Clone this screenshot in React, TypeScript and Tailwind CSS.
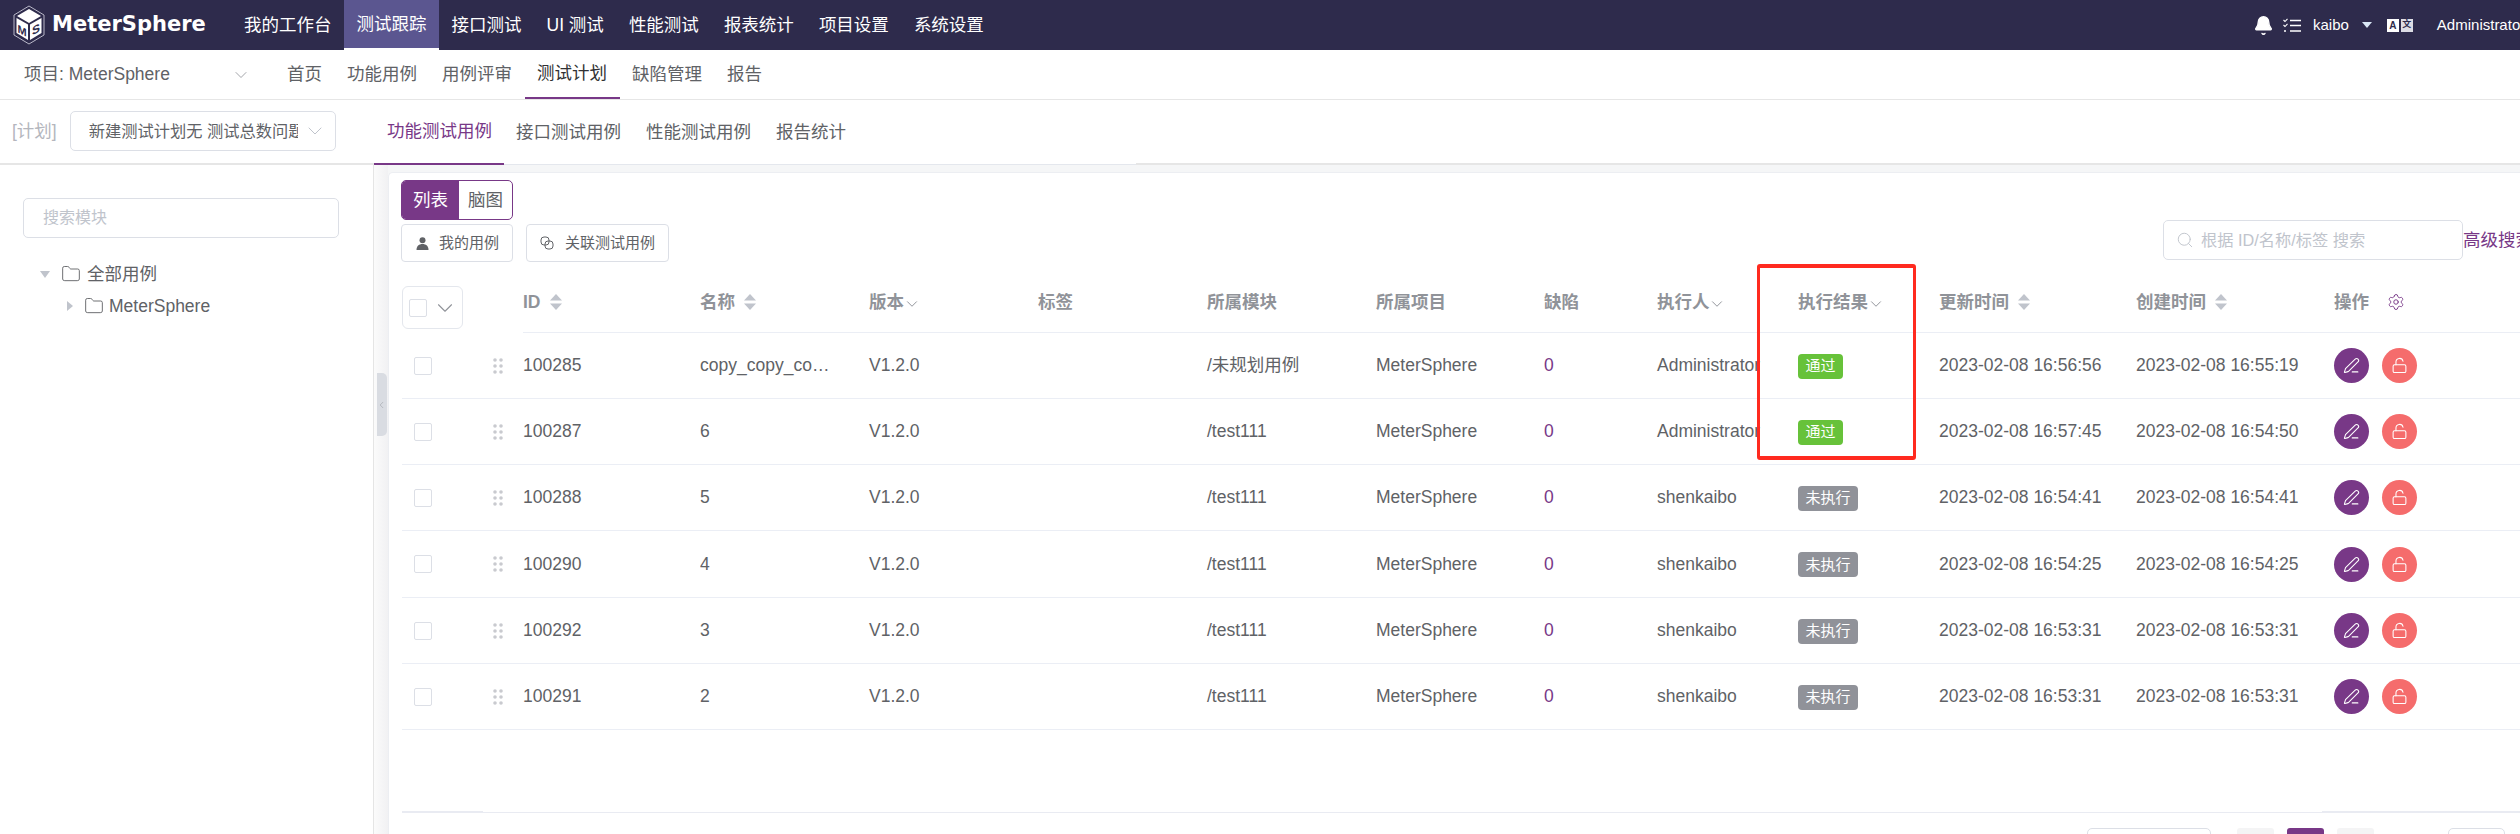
import { Bell, ChevronDown, ChevronLeft, Folder, LockOpen, PenLine, Search, Settings } from 'lucide-react';

const topNav = ['我的工作台', '测试跟踪', '接口测试', 'UI 测试', '性能测试', '报表统计', '项目设置', '系统设置'];
const subNav = ['首页', '功能用例', '用例评审', '测试计划', '缺陷管理', '报告'];
const tabs = ['功能测试用例', '接口测试用例', '性能测试用例', '报告统计'];

const gridCols =
  'grid grid-cols-[121px_177px_169px_169px_169px_169px_168px_113px_141px_141px_197px_198px_1fr]';

const rows = [
  { id: '100285', name: 'copy_copy_copy_copy_6', module: '/未规划用例', user: 'Administrator', result: '通过', updated: '2023-02-08 16:56:56', created: '2023-02-08 16:55:19' },
  { id: '100287', name: '6', module: '/test111', user: 'Administrator', result: '通过', updated: '2023-02-08 16:57:45', created: '2023-02-08 16:54:50' },
  { id: '100288', name: '5', module: '/test111', user: 'shenkaibo', result: '未执行', updated: '2023-02-08 16:54:41', created: '2023-02-08 16:54:41' },
  { id: '100290', name: '4', module: '/test111', user: 'shenkaibo', result: '未执行', updated: '2023-02-08 16:54:25', created: '2023-02-08 16:54:25' },
  { id: '100292', name: '3', module: '/test111', user: 'shenkaibo', result: '未执行', updated: '2023-02-08 16:53:31', created: '2023-02-08 16:53:31' },
  { id: '100291', name: '2', module: '/test111', user: 'shenkaibo', result: '未执行', updated: '2023-02-08 16:53:31', created: '2023-02-08 16:53:31' },
];

function Logo() {
  return (
    <svg width="32" height="40" viewBox="0 0 32 40" className="ml-[13px] shrink-0">
      <polygon points="16,1 31,10 31,30 16,39 1,30 1,10" fill="none" stroke="#b9b8c8" strokeWidth="1" />
      <polygon points="16,4 28,11 16,18 4,11" fill="#ffffff" />
      <polygon points="3.5,13 15,19.5 15,35 3.5,28" fill="#ffffff" />
      <polygon points="17,19.5 28.5,13 28.5,28 17,35" fill="#ffffff" />
      <text x="0" y="0" fontSize="11" fontWeight="700" fill="#2e2b4c" transform="translate(4.5,27) skewY(28)">M</text>
      <text x="0" y="0" fontSize="12" fontWeight="700" fill="#2e2b4c" transform="translate(19,30.5) skewY(-28)">S</text>
    </svg>
  );
}

function SortCaret() {
  return (
    <svg width="12" height="16" viewBox="0 0 12 16" className="shrink-0">
      <polygon points="6,0 12,6.5 0,6.5" fill="#c0c4cc" />
      <polygon points="0,9.5 12,9.5 6,16" fill="#c0c4cc" />
    </svg>
  );
}

function TreeCaret({ open }: { open: boolean }) {
  return open ? (
    <svg width="10" height="7" viewBox="0 0 10 7" className="shrink-0">
      <polygon points="0,0 10,0 5,7" fill="#c0c4cc" />
    </svg>
  ) : (
    <svg width="6" height="10" viewBox="0 0 6 10" className="shrink-0">
      <polygon points="0,0 6,5 0,10" fill="#c0c4cc" />
    </svg>
  );
}

function HeadCell({ label, sort, filter }: { label: string; sort?: boolean; filter?: boolean }) {
  return (
    <div className="h-[71px] pt-[10px] border-b border-[#ebeef5] flex items-center font-semibold text-[#909399]">
      <span>{label}</span>
      {sort && <span className="ml-[9px]"><SortCaret /></span>}
      {filter && <ChevronDown size={18} strokeWidth={1.3} className="-ml-[1.5px] mt-[3px] shrink-0 text-[#909399]" />}
    </div>
  );
}

export default function App() {
  return (
    <div className="relative w-[2520px] h-[834px] overflow-hidden bg-white text-[17.5px] text-[#606266] font-['Liberation_Sans','Noto_Sans_CJK_SC',sans-serif]">
      {/* top bar */}
      <div className="h-[50px] bg-[#2e2b4c] flex items-center text-white">
        <div className="w-[231.5px] shrink-0 flex items-center">
          <Logo />
          <span className="ml-[7px] text-[21px] font-bold font-['DejaVu_Sans',sans-serif]">MeterSphere</span>
        </div>
        {topNav.map((item) => (
          <div
            key={item}
            className={`h-[50px] px-[12.5px] flex items-center whitespace-nowrap ${
              item === '测试跟踪' ? 'bg-[#5b5690] border-b-2 border-white' : ''
            }`}
          >
            {item}
          </div>
        ))}
        <div className="ml-auto flex items-center text-[15px] w-[266px] shrink-0 whitespace-nowrap">
          <Bell size={21} fill="#ffffff" strokeWidth={1.5} className="-ml-[1.5px] shrink-0" />
          <svg width="18" height="15" viewBox="0 0 18 15" className="ml-[9.5px] shrink-0" fill="none" stroke="#ffffff">
            <path d="M7 2.5h11M7 7.5h11M7 13h11" strokeWidth="1.6" />
            <path d="M0.5 2l1.5 1.5L4.5 0.8M0.5 7l1.5 1.5L4.5 5.8" strokeWidth="1.1" />
            <circle cx="2" cy="13" r="1" fill="#ffffff" stroke="none" />
          </svg>
          <span className="ml-[12px] shrink-0">kaibo</span>
          <svg width="10" height="6" viewBox="0 0 10 6" className="ml-[13px] shrink-0">
            <polygon points="0,0 10,0 5,6" fill="#d9e6f5" />
          </svg>
          <span className="ml-[15px] flex shrink-0">
            <span className="w-[12px] h-[13px] bg-white text-[#2e2b4c] text-[10px] font-bold flex items-center justify-center">A</span>
            <span className="ml-[2px] w-[12px] h-[13px] bg-[#dcdce4] text-[#2e2b4c] text-[9px] font-bold flex items-center justify-center">文</span>
          </span>
          <span className="ml-[24px] shrink-0">Administrator</span>
        </div>
      </div>

      {/* project nav */}
      <div className="h-[50px] border-b border-[#e6e6e6] flex items-stretch">
        <div className="w-[274.5px] shrink-0 pl-[24px] flex items-center">
          <span className="w-[207px]">项目: MeterSphere</span>
          <ChevronDown size={20} strokeWidth={1} className="shrink-0 text-[#909399]" />
        </div>
        {subNav.map((item) => (
          <div
            key={item}
            className={`h-[49px] px-[12.5px] flex items-center ${
              item === '测试计划' ? 'border-b-2 border-[#783887] text-[#303133]' : ''
            }`}
          >
            {item}
          </div>
        ))}
      </div>

      {/* plan tabs */}
      <div className="h-[65px] flex">
        <div className="w-[374px] shrink-0 h-[65px] border-b-2 border-[#e6e6e6] pl-[12px] flex items-start pt-[11px]">
          <span className="h-[40px] flex items-center text-[#b4b6bd]">[计划]</span>
          <div className="ml-[13px] w-[266px] h-[40px] border border-[#dcdfe6] rounded-[5px] flex items-center pl-[18px] text-[16.25px]">
            <span className="w-[209px] shrink-0 overflow-hidden whitespace-nowrap">新建测试计划无 测试总数问题</span>
            <ChevronDown size={24} strokeWidth={1} className="ml-[5px] shrink-0 text-[#c0c4cc]" />
          </div>
        </div>
        <div className="flex-1 flex items-stretch">
          {tabs.map((tab, i) => (
            <div
              key={tab}
              className={`h-[65px] flex items-center whitespace-nowrap ${
                i === 0 ? 'w-[130px] pl-[13px] border-b-[2px] border-[#783887] text-[#783887]' : 'pl-[12px] pr-[13px] border-b border-[#e4e7ed]'
              }`}
            >
              {tab}
            </div>
          ))}
          <div className="w-[277px] h-[65px] border-b border-[#e4e7ed]" />
          <div className="flex-1 h-[65px] border-b-2 border-[#e6e6e6]" />
        </div>
      </div>

      {/* body */}
      <div className="h-[669px] flex">
        <div className="w-[374px] shrink-0 border-r border-[#e5e5e5] pl-[23px] pt-[33px]">
          <div className="w-[316px] h-[40px] border border-[#dcdfe6] rounded-[5px] flex items-center pl-[19px] text-[16px] text-[#c0c4cc]">
            搜索模块
          </div>
          <div className="mt-[20px] h-[32px] pl-[17px] flex items-center">
            <TreeCaret open />
            <Folder size={20} strokeWidth={1.1} className="ml-[11px] shrink-0" />
            <span className="ml-[6px]">全部用例</span>
          </div>
          <div className="h-[32px] pl-[44px] flex items-center">
            <TreeCaret open={false} />
            <Folder size={20} strokeWidth={1.1} className="ml-[11px] shrink-0" />
            <span className="ml-[5px]">MeterSphere</span>
          </div>
        </div>

        <div className="relative w-[14px] shrink-0 bg-gradient-to-r from-[#fbfbfb] to-[#f1f1f3]">
          <div className="absolute left-[3px] top-[208px] w-[10px] h-[63px] bg-[#d9dce2] rounded-r-[5px] flex items-center">
            <ChevronLeft size={12} strokeWidth={1} className="text-[#8d9097] -ml-[1px]" />
          </div>
        </div>

        <div className="flex-1 min-w-0 flex flex-col bg-[#f5f6f7]">
          <div className="flex-1 mt-[7px] bg-white border-t border-l border-[#eceef2] rounded-tl-[5px] pt-[7px] pl-[13px] overflow-hidden">
            <div className="-ml-px flex w-[112px] h-[40px] rounded-[5px] border border-[#783887] overflow-hidden">
              <div className="w-[57px] bg-[#783887] text-white flex items-center justify-center">列表</div>
              <div className="flex-1 flex items-center justify-center">脑图</div>
            </div>

            <div className="-ml-px h-[42px] flex items-start">
              <div className="mt-[4px] w-[112px] h-[38px] shrink-0 border border-[#dcdfe6] rounded-[4px] flex items-center pl-[14px] text-[15px]">
                <svg width="13" height="13" viewBox="0 0 13 13" fill="#606266" className="shrink-0">
                  <circle cx="6.5" cy="3.2" r="3" />
                  <path d="M0.5 13c0-4 2.5-6 6-6s6 2 6 6z" />
                </svg>
                <span className="ml-[10px] whitespace-nowrap">我的用例</span>
              </div>
              <div className="mt-[4px] ml-[13px] w-[143px] h-[38px] shrink-0 border border-[#dcdfe6] rounded-[4px] flex items-center pl-[13px] text-[15px]">
                <svg width="14" height="14" viewBox="0 0 14 14" fill="none" stroke="#606266" strokeWidth="1" className="shrink-0">
                  <rect x="1" y="1" width="8" height="8" rx="3" />
                  <rect x="5" y="5" width="8" height="8" rx="3" />
                </svg>
                <span className="ml-[11px] whitespace-nowrap">关联测试用例</span>
              </div>
              <div className="ml-[1494px] w-[300px] h-[40px] shrink-0 border border-[#dcdfe6] rounded-[5px] flex items-center pl-[12px] text-[16.25px] text-[#c0c4cc] whitespace-nowrap">
                <Search size={18} strokeWidth={1.25} className="shrink-0" />
                <span className="ml-[7px]">根据 ID/名称/标签 搜索</span>
              </div>
              <span className="h-[40px] shrink-0 flex items-center text-[#783887] whitespace-nowrap">高级搜索</span>
            </div>

            <div className={gridCols}>
              <div className="h-[71px] pt-[24px]">
                <div className="w-[61px] h-[43px] border border-[#e4e7ed] rounded-[6px] flex items-center pl-[6px]">
                  <span className="w-[18px] h-[18px] shrink-0 border border-[#dcdfe6] rounded-[2px]" />
                  <ChevronDown size={26} strokeWidth={1} className="ml-[5px] shrink-0 text-[#909399]" />
                </div>
              </div>
              <HeadCell label="ID" sort />
              <HeadCell label="名称" sort />
              <HeadCell label="版本" filter />
              <HeadCell label="标签" />
              <HeadCell label="所属模块" />
              <HeadCell label="所属项目" />
              <HeadCell label="缺陷" />
              <HeadCell label="执行人" filter />
              <HeadCell label="执行结果" filter />
              <HeadCell label="更新时间" sort />
              <HeadCell label="创建时间" sort />
              <div className="h-[71px] pt-[10px] border-b border-[#ebeef5] flex items-center font-semibold text-[#909399]">
                <span>操作</span>
                <Settings size={18} strokeWidth={1.25} className="ml-[18px] text-[#783887]" />
              </div>
            </div>

            {rows.map((row, i) => (
              <div
                key={row.id}
                className={`${gridCols} items-center border-b border-[#ebeef5] ${i === 3 ? 'h-[67px]' : 'h-[66px]'}`}
              >
                <div className="flex items-center pl-[12px]">
                  <span className="w-[18px] h-[18px] border border-[#dcdfe6] rounded-[2px]" />
                  <svg width="10" height="16" viewBox="0 0 10 16" fill="#c9cacf" className="ml-[61px]">
                    <circle cx="2" cy="2" r="1.8" />
                    <circle cx="8" cy="2" r="1.8" />
                    <circle cx="2" cy="8" r="1.8" />
                    <circle cx="8" cy="8" r="1.8" />
                    <circle cx="2" cy="14" r="1.8" />
                    <circle cx="8" cy="14" r="1.8" />
                  </svg>
                </div>
                <div>{row.id}</div>
                <div className="w-[139px] truncate">{row.name}</div>
                <div>V1.2.0</div>
                <div />
                <div>{row.module}</div>
                <div>MeterSphere</div>
                <div className="text-[#783887]">0</div>
                <div>{row.user}</div>
                <div>
                  <span
                    className={`inline-flex h-[25px] items-center justify-center rounded-[4px] text-[15px] text-white ${
                      row.result === '通过' ? 'w-[45px] bg-[#67c23a]' : 'w-[60px] bg-[#909299]'
                    }`}
                  >
                    {row.result}
                  </span>
                </div>
                <div>{row.updated}</div>
                <div>{row.created}</div>
                <div className="flex items-center gap-[13px]">
                  <span className="w-[35px] h-[35px] rounded-full bg-[#783887] text-white flex items-center justify-center">
                    <PenLine size={17} strokeWidth={1.5} />
                  </span>
                  <span className="w-[35px] h-[35px] rounded-full bg-[#f56c6c] text-white flex items-center justify-center">
                    <LockOpen size={17} strokeWidth={1.5} />
                  </span>
                </div>
              </div>
            ))}

            <div className="mt-[81px] h-[2px] flex">
              <div className="w-[81px] bg-[#e9ebf2]" />
              <div className="flex-1 h-px self-end bg-[#e9ebf2]" />
              <div className="w-[198px] bg-[#e9ebf2]" />
            </div>

            <div className="mt-[15px] flex items-start">
              <div className="ml-[1685px] w-[124px] h-[40px] shrink-0 border border-[#dcdfe6] rounded-[5px]" />
              <div className="ml-[26px] w-[37px] h-[40px] shrink-0 bg-[#f4f4f5] rounded-[3px]" />
              <div className="ml-[13px] w-[37px] h-[40px] shrink-0 bg-[#783887] rounded-[3px]" />
              <div className="ml-[13px] w-[37px] h-[40px] shrink-0 bg-[#f4f4f5] rounded-[3px]" />
              <div className="ml-[74px] w-[57px] h-[40px] shrink-0 border border-[#dcdfe6] rounded-[5px]" />
            </div>
          </div>
        </div>
      </div>

      {/* red highlight drawn over the screenshot */}
      <div className="absolute left-[1757px] top-[264px] w-[159px] h-[196px] border-x-[3px] border-y-[4px] border-[#ff2a1f] rounded-[3px]" />
    </div>
  );
}
